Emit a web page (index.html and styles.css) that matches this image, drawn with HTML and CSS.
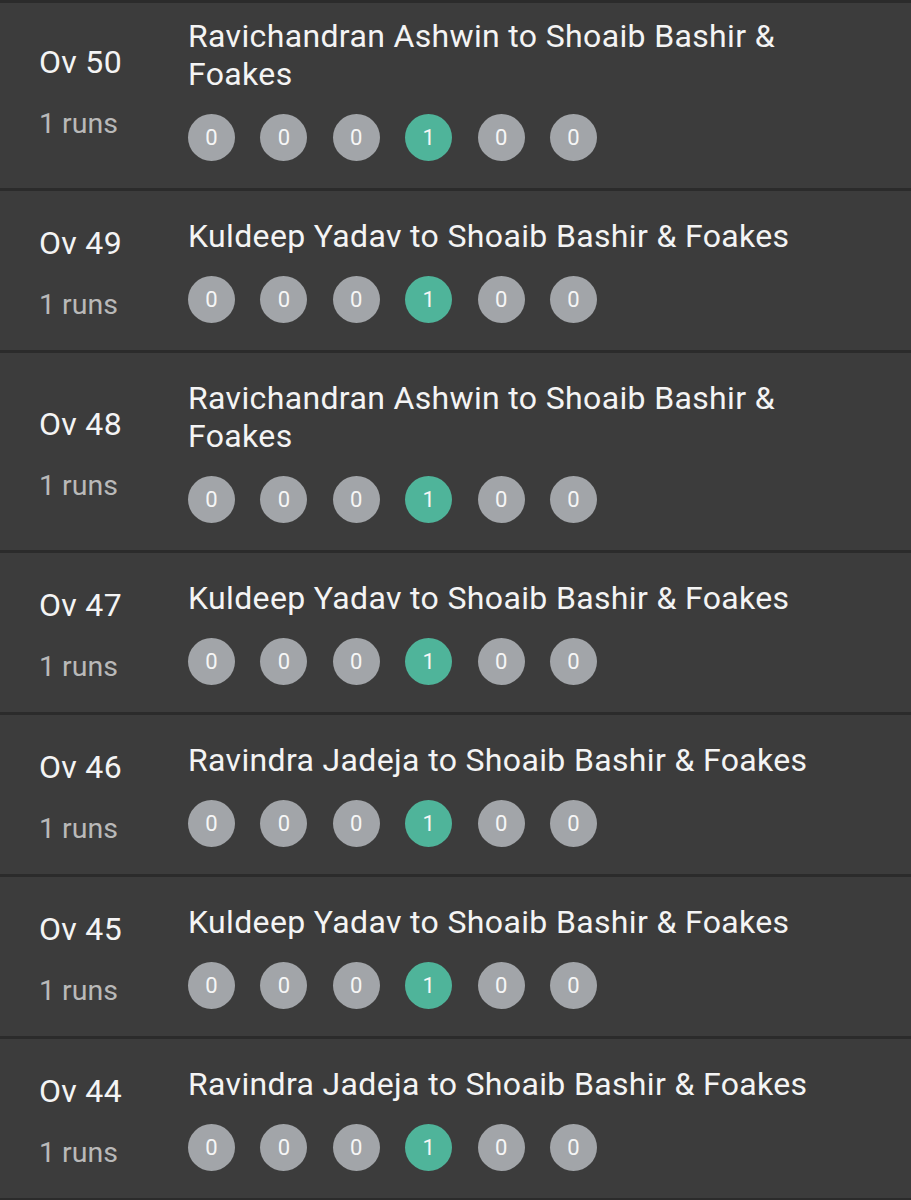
FILE: index.html
```html
<!DOCTYPE html>
<html lang="en">
<head>
    <meta charset="UTF-8">
    <title>Overs</title>
    <link rel="stylesheet" href="styles.css">
</head>
<body>
<div class="overs">
    <div class="over first">
        <div class="over-info">
            <div class="over-num">Ov 50</div>
            <div class="over-runs">1 runs</div>
        </div>
        <div class="over-detail">
            <div class="over-title">Ravichandran Ashwin to Shoaib Bashir &amp; Foakes</div>
            <div class="balls">
                <span class="ball">0</span><span class="ball">0</span><span class="ball">0</span>
                <span class="ball run">1</span><span class="ball">0</span><span class="ball">0</span>
            </div>
        </div>
    </div>

    <div class="over">
        <div class="over-info">
            <div class="over-num">Ov 49</div>
            <div class="over-runs">1 runs</div>
        </div>
        <div class="over-detail">
            <div class="over-title">Kuldeep Yadav to Shoaib Bashir &amp; Foakes</div>
            <div class="balls">
                <span class="ball">0</span><span class="ball">0</span><span class="ball">0</span>
                <span class="ball run">1</span><span class="ball">0</span><span class="ball">0</span>
            </div>
        </div>
    </div>

    <div class="over">
        <div class="over-info">
            <div class="over-num">Ov 48</div>
            <div class="over-runs">1 runs</div>
        </div>
        <div class="over-detail">
            <div class="over-title">Ravichandran Ashwin to Shoaib Bashir &amp; Foakes</div>
            <div class="balls">
                <span class="ball">0</span><span class="ball">0</span><span class="ball">0</span>
                <span class="ball run">1</span><span class="ball">0</span><span class="ball">0</span>
            </div>
        </div>
    </div>

    <div class="over">
        <div class="over-info">
            <div class="over-num">Ov 47</div>
            <div class="over-runs">1 runs</div>
        </div>
        <div class="over-detail">
            <div class="over-title">Kuldeep Yadav to Shoaib Bashir &amp; Foakes</div>
            <div class="balls">
                <span class="ball">0</span><span class="ball">0</span><span class="ball">0</span>
                <span class="ball run">1</span><span class="ball">0</span><span class="ball">0</span>
            </div>
        </div>
    </div>

    <div class="over">
        <div class="over-info">
            <div class="over-num">Ov 46</div>
            <div class="over-runs">1 runs</div>
        </div>
        <div class="over-detail">
            <div class="over-title">Ravindra Jadeja to Shoaib Bashir &amp; Foakes</div>
            <div class="balls">
                <span class="ball">0</span><span class="ball">0</span><span class="ball">0</span>
                <span class="ball run">1</span><span class="ball">0</span><span class="ball">0</span>
            </div>
        </div>
    </div>

    <div class="over">
        <div class="over-info">
            <div class="over-num">Ov 45</div>
            <div class="over-runs">1 runs</div>
        </div>
        <div class="over-detail">
            <div class="over-title">Kuldeep Yadav to Shoaib Bashir &amp; Foakes</div>
            <div class="balls">
                <span class="ball">0</span><span class="ball">0</span><span class="ball">0</span>
                <span class="ball run">1</span><span class="ball">0</span><span class="ball">0</span>
            </div>
        </div>
    </div>

    <div class="over">
        <div class="over-info">
            <div class="over-num">Ov 44</div>
            <div class="over-runs">1 runs</div>
        </div>
        <div class="over-detail">
            <div class="over-title">Ravindra Jadeja to Shoaib Bashir &amp; Foakes</div>
            <div class="balls">
                <span class="ball">0</span><span class="ball">0</span><span class="ball">0</span>
                <span class="ball run">1</span><span class="ball">0</span><span class="ball">0</span>
            </div>
        </div>
    </div>
</div>
</body>
</html>
```

FILE: styles.css
```css
body {
    margin: 0;
    background-color: #3c3c3c;
    font-family: Roboto, "Noto Sans", sans-serif;
    height: 1200px;
    overflow: hidden;
}

.overs {
    border-top: 3px solid #2b2b2b;
}

.over {
    display: flex;
    align-items: center;
    padding: 26px 0 27px 39px;
    border-bottom: 3px solid #2b2b2b;
}

.over.first {
    margin-top: -12px;
}

.over-info {
    width: 149px;
    flex-shrink: 0;
    padding-top: 3px;
}

.over-num {
    color: #f4f4f4;
    font-size: 32px;
    letter-spacing: 0.3px;
    line-height: 38px;
}

.over-runs {
    color: #b9b9b9;
    font-size: 28.5px;
    line-height: 30px;
    margin-top: 28px;
}

.over-detail {
    flex: 1;
    padding-right: 100px;
}

.over-title {
    color: #f4f4f4;
    font-size: 32px;
    letter-spacing: 0.35px;
    line-height: 38px;
    margin-bottom: 21px;
}

.balls {
    display: flex;
    gap: 25.4px;
}

.ball {
    width: 47px;
    height: 47px;
    border-radius: 50%;
    background-color: #a2a5a9;
    color: #f6f6f6;
    font-size: 22px;
    display: flex;
    align-items: center;
    justify-content: center;
}

.ball.run {
    background-color: #4fb49a;
}
```
